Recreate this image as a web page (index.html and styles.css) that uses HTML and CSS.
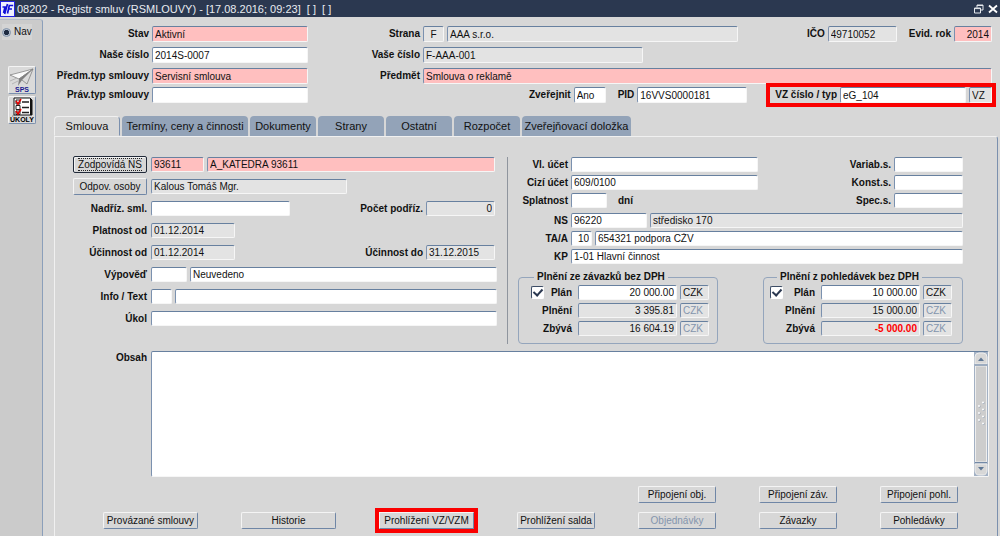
FILE: index.html
```html
<!DOCTYPE html>
<html lang="cs">
<head>
  <meta charset="UTF-8">
  <meta name="viewport" content="width=device-width, initial-scale=1.0">
  <title>08202 - Registr smluv (RSMLOUVY)</title>
  <link rel="stylesheet" href="styles.css">
</head>
<body>
  <header class="titlebar">
    <svg class="logo" viewBox="0 0 15 16" width="15" height="16">
      <rect x="0.5" y="0.5" width="14" height="15" fill="#eef0ff" stroke="#2222e0"/>
      <path d="M2.500 6H5L3.600 12M7.500 12.500L9.300 4.500H13.200M8.500 8H12M7.500 3L4.600 13" fill="none" stroke="#1010d8" stroke-width="1.700"/>
    </svg>
    <h1 class="title">08202 - Registr smluv (RSMLOUVY) - [17.08.2016; 09:23]&nbsp; [ ]&nbsp; [ ]</h1>
    <button class="winbtn" type="button" aria-label="Obnovit">
      <svg viewBox="0 0 10 10" width="10" height="10" fill="none" stroke="#e6e9ee"><path d="M3 3.5V1H9V6H6.5M3 1.5H9"/><path d="M.5 4H6.5V9H.5ZM.5 4.6H6.5"/></svg>
    </button>
    <button class="winbtn" type="button" aria-label="Zavřít">
      <svg viewBox="0 0 10 10" width="10" height="10" stroke="#fff" stroke-width="1.8"><path d="M1 1.5L9 8.5M9 1.5L1 8.5"/></svg>
    </button>
  </header>

  <div class="layout">
    <nav class="sidebar">
      <label class="nav"><input type="radio" name="nav" checked>Nav</label>
      <button class="tool" type="button" aria-label="SPS">
        <svg viewBox="0 0 26 26" width="26" height="26">
          <path d="M1 8L24 2L10 12Z" fill="#fafafa" stroke="#777" stroke-width=".7"/>
          <path d="M10 12L24 2L18 17L13 13Z" fill="#dcdcdc" stroke="#777" stroke-width=".7"/>
          <path d="M10 12L24 2L13 13L9 19Z" fill="#808080"/>
          <path d="M1 14L8 11M3 17L9 14" stroke="#b5b5b5"/>
          <text x="13" y="25" class="tooltext sps">SPS</text>
        </svg>
      </button>
      <button class="tool" type="button" aria-label="Úkoly">
        <svg viewBox="0 0 26 26" width="26" height="26">
          <path d="M5 1H21L23 3V18H5Z" fill="#fff" stroke="#111"/>
          <path d="M22 2V18" stroke="#111" stroke-width="2"/>
          <path d="M7 3H11V7H7ZM7 8.500H11V12.500H7ZM7 14H11V17.500H7Z" fill="#fff" stroke="#222"/>
          <path d="M13 5H20M13 10.500H20M13 15.500H20" stroke="#222" stroke-width="1.400"/>
          <path d="M7 4L9 7L12 2M7 14L9 17L12 12" fill="none" stroke="#e00000" stroke-width="1.500"/>
          <text x="13" y="25" class="tooltext">ÚKOLY</text>
        </svg>
      </button>
    </nav>

    <main class="main">
      <form class="head">
        <div class="row">
          <label class="lab head-left" for="stav">Stav</label>
          <input class="w156 req" id="stav" value="Aktivní">
          <label class="lab head-right" for="strana">Strana</label>
          <input class="w21 ro center" id="strana" value="F" readonly>
          <input class="grow ro" aria-label="Název strany" value="AAA s.r.o." readonly>
          <label class="lab ico" for="ico">IČO</label>
          <input class="w69 ro" id="ico" value="49710052" readonly>
          <label class="lab next" for="rok">Evid. rok</label>
          <input class="w38 req num" id="rok" value="2014">
        </div>
        <div class="row">
          <label class="lab head-left" for="nase">Naše číslo</label>
          <input class="w156" id="nase" value="2014S-0007">
          <label class="lab head-right" for="vase">Vaše číslo</label>
          <input class="w220 ro" id="vase" value="F-AAA-001" readonly>
        </div>
        <div class="row tight">
          <label class="lab head-left" for="predm">Předm.typ smlouvy</label>
          <input class="w156 req" id="predm" value="Servisní smlouva">
          <label class="lab head-right" for="predmet">Předmět</label>
          <input class="grow req" id="predmet" value="Smlouva o reklamě">
        </div>
        <div class="row">
          <label class="lab head-left" for="prav">Práv.typ smlouvy</label>
          <input class="w156" id="prav">
          <label class="lab push" for="zver">Zveřejnit</label>
          <input class="w32" id="zver" value="Ano">
          <label class="lab next" for="pid">PID</label>
          <input class="w110" id="pid" value="16VVS0000181">
          <div class="row vz marked">
            <label class="lab" for="vz">VZ číslo / typ</label>
            <input class="w126" id="vz" value="eG_104">
            <input class="w23 ro" aria-label="Typ VZ" value="VZ" readonly>
          </div>
        </div>
      </form>

      <div class="tabs" role="tablist">
        <button class="tab active" type="button" role="tab" aria-selected="true">Smlouva</button>
        <button class="tab wide" type="button" role="tab">Termíny, ceny a činnosti</button>
        <button class="tab" type="button" role="tab">Dokumenty</button>
        <button class="tab" type="button" role="tab">Strany</button>
        <button class="tab" type="button" role="tab">Ostatní</button>
        <button class="tab" type="button" role="tab">Rozpočet</button>
        <button class="tab mid" type="button" role="tab">Zveřejňovací doložka</button>
      </div>

      <section class="panel" role="tabpanel">
        <div class="columns">
          <div class="left">
            <div class="row">
              <button class="btn side focused" type="button"><span>Zodpovídá NS</span></button>
              <input class="w53 req" aria-label="Kód NS" value="93611">
              <input class="grow req" aria-label="Název NS" value="A_KATEDRA 93611">
            </div>
            <div class="row">
              <button class="btn side" type="button">Odpov. osoby</button>
              <input class="w196 ro" aria-label="Odpovědná osoba" value="Kalous Tomáš Mgr." readonly>
            </div>
            <div class="row">
              <label class="lab side" for="nadriz">Nadříz. sml.</label>
              <input class="w139" id="nadriz">
              <label class="lab push" for="pocet">Počet podříz.</label>
              <input class="w69 ro num" id="pocet" value="0" readonly>
            </div>
            <div class="row">
              <label class="lab side" for="platnost">Platnost od</label>
              <input class="w84 ro" id="platnost" value="01.12.2014" readonly>
            </div>
            <div class="row">
              <label class="lab side" for="ucod">Účinnost od</label>
              <input class="w84 ro" id="ucod" value="01.12.2014" readonly>
              <label class="lab push" for="ucdo">Účinnost do</label>
              <input class="w69 ro" id="ucdo" value="31.12.2015" readonly>
            </div>
            <div class="row">
              <label class="lab side" for="vypoved">Výpověď</label>
              <input class="w36" id="vypoved">
              <input class="grow" aria-label="Výpověď popis" value="Neuvedeno">
            </div>
            <div class="row">
              <label class="lab side" for="info">Info / Text</label>
              <input class="w21" id="info">
              <input class="grow" aria-label="Text">
            </div>
            <div class="row">
              <label class="lab side" for="ukol">Úkol</label>
              <input class="grow" id="ukol">
            </div>
          </div>

          <div class="right">
            <div class="block">
              <div class="row">
                <label class="lab acc" for="vlucet">Vl. účet</label>
                <input class="w187" id="vlucet">
                <label class="lab push" for="variab">Variab.s.</label>
                <input class="w69" id="variab">
              </div>
              <div class="row">
                <label class="lab acc" for="cizi">Cizí účet</label>
                <input class="w187" id="cizi" value="609/0100">
                <label class="lab push" for="konst">Konst.s.</label>
                <input class="w69" id="konst">
              </div>
              <div class="row">
                <label class="lab acc" for="splat">Splatnost</label>
                <input class="w36" id="splat">
                <span class="lab unit">dní</span>
                <label class="lab push" for="spec">Spec.s.</label>
                <input class="w69" id="spec">
              </div>
            </div>
            <div class="block">
              <div class="row">
                <label class="lab acc" for="ns">NS</label>
                <input class="w76" id="ns" value="96220">
                <input class="grow ro" aria-label="Středisko" value="středisko 170" readonly>
              </div>
              <div class="row">
                <label class="lab acc" for="taa">TA/A</label>
                <input class="w21 num" id="taa" value="10">
                <input class="grow" aria-label="Akce" value="654321 podpora CŽV">
              </div>
              <div class="row">
                <label class="lab acc" for="kp">KP</label>
                <input class="grow" id="kp" value="1-01 Hlavní činnost">
              </div>
            </div>

            <div class="plans">
              <fieldset class="plan">
                <legend>Plnění ze závazků bez DPH</legend>
                <div class="row">
                  <input type="checkbox" id="planz" checked>
                  <label class="lab push" for="planz">Plán</label>
                  <input class="w99 num" aria-label="Plán závazky" value="20 000.00">
                  <input class="w29 ro" aria-label="Měna" value="CZK" readonly>
                </div>
                <div class="row">
                  <label class="lab push" for="plnz">Plnění</label>
                  <input class="w99 ro num" id="plnz" value="3 395.81" readonly>
                  <input class="w29 ro" aria-label="Měna" value="CZK" disabled>
                </div>
                <div class="row">
                  <label class="lab push" for="zbz">Zbývá</label>
                  <input class="w99 ro num" id="zbz" value="16 604.19" readonly>
                  <input class="w29 ro" aria-label="Měna" value="CZK" disabled>
                </div>
              </fieldset>
              <fieldset class="plan">
                <legend>Plnění z pohledávek bez DPH</legend>
                <div class="row">
                  <input type="checkbox" id="planp" checked>
                  <label class="lab push" for="planp">Plán</label>
                  <input class="w99 num" aria-label="Plán pohledávky" value="10 000.00">
                  <input class="w29 ro" aria-label="Měna" value="CZK" readonly>
                </div>
                <div class="row">
                  <label class="lab push" for="plnp">Plnění</label>
                  <input class="w99 ro num" id="plnp" value="15 000.00" readonly>
                  <input class="w29 ro" aria-label="Měna" value="CZK" disabled>
                </div>
                <div class="row">
                  <label class="lab push" for="zbp">Zbývá</label>
                  <input class="w99 ro num minus" id="zbp" value="-5 000.00" readonly>
                  <input class="w29 ro" aria-label="Měna" value="CZK" disabled>
                </div>
              </fieldset>
            </div>
          </div>
        </div>

        <div class="content">
          <label class="lab side" for="obsah">Obsah</label>
          <div class="memo">
            <textarea id="obsah"></textarea>
            <svg class="scroll" viewBox="0 0 14 124" width="14" height="124">
              <rect width="14" height="124" fill="#a3b1c4"/>
              <path d="M1 12V5Q1 1 5 1H9Q13 1 13 5V12Z" fill="#d7d7d7" stroke="#eee"/>
              <path d="M4 9L7 5.500L10 9Z" fill="#5e7795"/>
              <rect x="1.500" y="14" width="11" height="96" fill="#cdcdcd" stroke="#eee"/>
              <path d="M1 13H13M1 110.500H13" stroke="#7389a6"/>
              <path d="M1 112H13V118Q13 123 9 123H5Q1 123 1 118Z" fill="#d7d7d7" stroke="#eee"/>
              <path d="M4 115L7 118.500L10 115Z" fill="#5e7795"/>
              <g fill="#8f9db0">
                <circle cx="5.500" cy="54.500" r="1"/><circle cx="5.500" cy="61.500" r="1"/><circle cx="5.500" cy="68.500" r="1"/>
                <circle cx="9.500" cy="51" r="1"/><circle cx="9.500" cy="58" r="1"/><circle cx="9.500" cy="65" r="1"/><circle cx="9.500" cy="72" r="1"/>
              </g>
              <g fill="#fff">
                <circle cx="5" cy="54" r="1"/><circle cx="5" cy="61" r="1"/><circle cx="5" cy="68" r="1"/>
                <circle cx="9" cy="50.500" r="1"/><circle cx="9" cy="57.500" r="1"/><circle cx="9" cy="64.500" r="1"/><circle cx="9" cy="71.500" r="1"/>
              </g>
            </svg>
          </div>
        </div>

        <div class="actions">
          <button class="btn" type="button">Připojení obj.</button>
          <button class="btn" type="button">Připojení záv.</button>
          <button class="btn" type="button">Připojení pohl.</button>
        </div>
        <div class="actions">
          <button class="btn big" type="button">Provázané smlouvy</button>
          <button class="btn big" type="button">Historie</button>
          <button class="btn big marked" type="button">Prohlížení VZ/VZM</button>
          <button class="btn" type="button">Prohlížení salda</button>
          <button class="btn" type="button" disabled>Objednávky</button>
          <button class="btn" type="button">Závazky</button>
          <button class="btn" type="button">Pohledávky</button>
        </div>
      </section>
    </main>
  </div>
</body>
</html>
```
FILE: styles.css
```css
* {
  box-sizing: border-box;
}
body {
  margin: 0;
  min-height: 100vh;
  display: flex;
  flex-direction: column;
  background: #d7d7d7;
  color: #111;
  font: 10px/14px "Liberation Sans", Arial, sans-serif;
}
input, button, textarea {
  font: inherit;
  color: inherit;
  margin: 0;
}

/* title bar */
.titlebar {
  display: flex;
  align-items: center;
  height: 17px;
  padding-right: 2px;
  background: #2b3850;
  color: #e8ebf0;
}
.title {
  flex: 1;
  margin: 0 0 0 2px;
  font-size: 11px;
  font-weight: normal;
}
.winbtn {
  display: flex;
  padding: 0;
  margin-left: 4px;
  border: 0;
  background: none;
}

.layout {
  flex: 1;
  display: flex;
}

/* left tool strip */
.sidebar {
  width: 43px;
  margin-top: 2px;
  padding: 4px 0 0 8px;
  border-right: 1px solid #8b9fba;
  border-top: 1px solid #b4bdc9;
  border-top-right-radius: 3px;
  background: #cbcbcb;
}
.nav {
  display: flex;
  align-items: center;
  gap: 3px;
  width: 30px;
  height: 16px;
  margin: 0 0 26px -6px;
  background: #d4d4d4;
}
.nav input {
  appearance: none;
  width: 9px;
  height: 9px;
  border: 1px solid #8193aa;
  border-radius: 50%;
  background: radial-gradient(#1f2c42 45%, #b8c2d0 60%);
}
.tool {
  display: block;
  width: 28px;
  height: 28px;
  padding: 0;
  margin-bottom: 2px;
  border: 1px solid;
  border-color: #f4f4f4 #7b90ae #7b90ae #f4f4f4;
  border-radius: 2px;
  background: #dadada;
}
.tool svg {
  display: block;
}
.tooltext {
  font-size: 7px;
  font-weight: bold;
  text-anchor: middle;
}
.sps {
  fill: #1a1a90;
}

.main {
  flex: 1;
  min-width: 0;
  display: flex;
  flex-direction: column;
}

/* form rows and fields */
.row {
  display: flex;
  align-items: center;
  gap: 3px;
}
.row input, .memo {
  height: 16px;
  padding: 0 2px;
  border: 1px solid;
  border-color: #67809f #f6f6f6 #f6f6f6 #7b91af;
  border-radius: 2px;
  background: #fff;
}
.row .req {
  background: #ffbfbf;
}
.row .ro {
  background: #e3e3e3;
}
.row input:disabled {
  color: #8495ad;
}
.num {
  text-align: right;
}
.center {
  text-align: center;
}
.row .minus {
  color: #f00;
  font-weight: bold;
}
.lab {
  font-weight: bold;
  text-align: right;
  white-space: nowrap;
}
.push {
  margin-left: auto;
}
.next {
  margin-left: 9px;
}
.grow {
  flex: 1;
  min-width: 0;
}
.w21 { width: 21px; }
.w23 { width: 23px; }
.w29 { width: 29px; }
.w32 { width: 32px; }
.w36 { width: 36px; }
.w38 { width: 38px; }
.w53 { width: 53px; }
.w69 { width: 69px; }
.w76 { width: 76px; }
.w84 { width: 84px; }
.w99 { width: 99px; }
.w110 { width: 110px; }
.w126 { width: 126px; }
.w139 { width: 139px; }
.w156 { width: 156px; }
.w187 { width: 187px; }
.w196 { width: 196px; }
.w220 { width: 220px; }

.head {
  padding: 9px 8px 8px 0;
}
.head > .row {
  margin-bottom: 5px;
}
.head > .tight {
  margin-bottom: 3px;
}
.head-left {
  width: 106px;
}
.head-right {
  width: 109px;
}
.ico {
  width: 84px;
}
.vz {
  margin-left: 20px;
  padding-left: 5px;
}
.marked {
  outline: 4px solid #fa0000;
}

/* tabs */
.tabs {
  display: flex;
  gap: 2px;
  padding-left: 11px;
}
.tab {
  width: 66px;
  height: 20px;
  padding: 0;
  border: 0;
  border-radius: 4px 4px 0 0;
  background: #93a3b8;
  font-size: 11px;
  white-space: nowrap;
}
.tab.wide {
  width: 126px;
}
.tab.mid {
  width: 109px;
}
.tab.active {
  border: 1px solid;
  border-color: #f0f0f0 #7b90ae transparent #f0f0f0;
  background: #d7d7d7;
}

.panel {
  flex: 1;
  margin: 0 2px 0 11px;
  padding: 20px 8px 7px 18px;
  border: solid #f0f0f0;
  border-width: 1px 1px 0 1px;
  border-right-color: #7b90ae;
  border-top-right-radius: 3px;
}
.columns {
  display: flex;
}
.left {
  width: 435px;
  padding-right: 10px;
  border-right: 1px solid #8f959e;
  display: flex;
  flex-direction: column;
  gap: 7px;
}
.panel .row {
  height: 15px;
}
.panel .row input {
  height: 15px;
}
.side {
  flex: none;
  width: 74px;
  margin-right: 1px;
}
.left .row:nth-child(-n+5) {
  padding-right: 2px;
}
.right {
  flex: 1;
  padding: 0 26px 0 10px;
}
.block {
  display: flex;
  flex-direction: column;
  gap: 3px;
  margin-bottom: 5px;
}
.acc {
  width: 50px;
}
.unit {
  margin-left: 8px;
}

.plans {
  display: flex;
  justify-content: space-between;
  margin-top: 7px;
}
.plan {
  width: 200px;
  margin: 0;
  padding: 2px 8px 7px 12px;
  border: 1px solid #94a5bc;
  border-radius: 4px;
}
.plan:last-child {
  padding-left: 6px;
  padding-right: 10px;
}
.plan legend {
  margin-left: 3px;
  padding: 0 3px;
  line-height: 12px;
  font-weight: bold;
}
.plan:last-child legend {
  margin-left: 7px;
}
.plan .row + .row {
  margin-top: 3px;
}
.plan .lab {
  margin-right: 3px;
}
.panel .row input[type="checkbox"] {
  appearance: none;
  width: 13px;
  height: 13px;
  padding: 0;
  border-color: #3d4d66 #fff #fff #3d4d66;
}
.row input[type="checkbox"]:checked::after {
  content: "";
  display: block;
  width: 4px;
  height: 7px;
  margin: 0 0 0 3px;
  border: solid #2b3850;
  border-width: 0 2px 2px 0;
  transform: rotate(42deg);
}

/* long text */
.content {
  display: flex;
  gap: 3px;
  margin-top: 7px;
}
.memo {
  flex: 1;
  display: flex;
  height: 126px;
  padding: 0;
}
.memo textarea {
  flex: 1;
  padding: 2px;
  border: 0;
  outline: 0;
  resize: none;
  background: none;
}

/* buttons */
.btn {
  width: 78px;
  height: 17px;
  padding: 0;
  border: 1px solid;
  border-color: #f4f4f4 #6f86a6 #6f86a6 #f4f4f4;
  border-radius: 2px;
  background: #d7d7d7;
  line-height: 13px;
  white-space: nowrap;
}
.btn:disabled {
  color: #8495ad;
}
.btn.big {
  width: 95px;
}
.btn.marked {
  border-radius: 0;
}
.btn.side {
  width: 74px;
}
.btn.focused {
  border-color: #222b3a;
  box-shadow: inset 1px 1px #f4f4f4;
}
.focused span {
  border: dotted #222;
  border-width: 1px 0;
}
.actions {
  display: flex;
  justify-content: flex-end;
  gap: 43px;
  margin-top: 9px;
  padding-right: 31px;
}
```
